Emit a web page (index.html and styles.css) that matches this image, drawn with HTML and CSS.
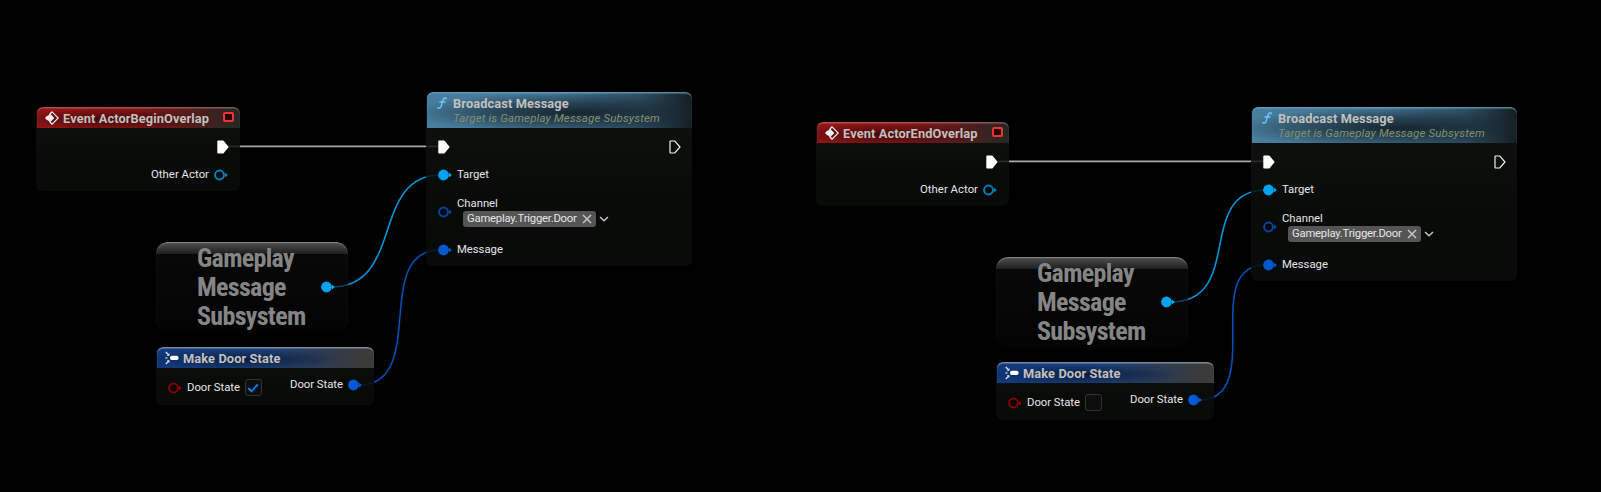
FILE: index.html
```
<!DOCTYPE html>
<html lang="en">
<head>
<meta charset="utf-8">
<title>Blueprint graph</title>
<link rel="stylesheet" href="styles.css">
</head>
<body>
<svg class="defs" width="0" height="0">
  <symbol id="i-event" viewBox="0 0 14 14"><path d="M7 .8 13.2 7 7 13.2 5.2 11.4V8.6H2.4L.8 7 2.4 5.4H5.2V2.6Z" fill="#560b0b" stroke="#f4eeee" stroke-width="1.2"/><path d="M.6 7 2.4 5.3H6V3.6L9.4 7 6 10.4V8.7H2.4Z" fill="#f4eeee"/><path d="M.8 7 7 .8 5 5.4ZM.8 7 7 13.2 5 8.6Z" fill="#f4eeee"/></symbol>
  <symbol id="i-func" viewBox="0 0 10 12"><path d="M9.2 1.6C8.6.5 6.9.6 6.3 2.2L4 9.6C3.5 11.2 1.7 11.6.8 10.6M3 4.9H8" fill="none" stroke="#6fc4f5" stroke-width="1.5" stroke-linecap="round"/></symbol>
  <symbol id="i-make" viewBox="0 0 14 14"><rect x="5" y="4.8" width="8.6" height="4.2" rx="1.9" fill="#fff"/><path d="M.8 1 3.6 3.8M.8 13 3.6 10.2M.2 7H2.6" stroke="#e8eef5" stroke-width="1.2"/><path d="M4.4 2V4.7H1.7ZM4.4 12V9.3H1.7Z" fill="#e8eef5"/></symbol>
  <symbol id="i-exec" viewBox="0 0 12 14"><path d="M.3 1.3Q.3.5 1.1.5H5.8Q6.4.5 6.8 1L11.7 7 6.8 13Q6.4 13.5 5.8 13.5H1.1Q.3 13.5.3 12.7Z" fill="#fff"/></symbol>
  <symbol id="i-exec-open" viewBox="0 0 12 14"><path d="M1 1.4Q1 1 1.4 1H5.8L11 7 5.8 13H1.4Q1 13 1 12.6Z" fill="none" stroke="#f2f2f2" stroke-width="1.2"/></symbol>
  <symbol id="i-pin" viewBox="0 0 14 12"><circle cx="5.5" cy="6" r="5.4" fill="currentColor"/><path d="M11 3.4 13.9 6 11 8.6Z" fill="currentColor"/></symbol>
  <symbol id="i-ring" viewBox="0 0 14 12"><circle cx="5.5" cy="6" r="4.4" fill="#030507" stroke="currentColor" stroke-width="2"/><path d="M11 3.4 13.9 6 11 8.6Z" fill="currentColor"/></symbol>
  <symbol id="i-x" viewBox="0 0 10 10"><path d="M1 1 9 9M9 1 1 9" stroke="#c4c4c4" stroke-width="1.5"/></symbol>
  <symbol id="i-down" viewBox="0 0 10 6"><path d="M1 1 5 4.8 9 1" fill="none" stroke="#c8c8c8" stroke-width="1.4"/></symbol>
  <symbol id="i-check" viewBox="0 0 12 10"><path d="M1.2 5 4.5 8.3 10.8 1.4" fill="none" stroke="#0a7af0" stroke-width="2"/></symbol>
</svg>

<main class="canvas">
  <svg class="wires" width="1601" height="492" fill="none">
    <path class="w-exec" d="M228 146.3H440"/>
    <path class="w-object" d="M331 287C405 287 370 175 441 175"/>
    <path class="w-struct" d="M358 385.3C430 385.3 370 249.7 441 249.7"/>
    <path class="w-exec" d="M998 161.3H1265"/>
    <path class="w-object" d="M1171 302C1245 302 1195 190 1266 190"/>
    <path class="w-struct" d="M1198 400.3C1268 400.3 1198 264.7 1266 264.7"/>
  </svg>

  <section class="node event event-a">
    <header class="head red"><svg class="ic14"><use href="#i-event"/></svg><h2>Event ActorBeginOverlap</h2><i class="delegate"></i></header>
    <div class="row exec-row"><svg class="exec"><use href="#i-exec"/></svg></div>
    <div class="row actor-row"><span>Other Actor</span><svg class="pin object-dim"><use href="#i-ring"/></svg></div>
  </section>

  <section class="node call call-a">
    <header class="head teal"><svg class="icf"><use href="#i-func"/></svg><div><h2>Broadcast Message</h2><p>Target is Gameplay Message Subsystem</p></div></header>
    <div class="row call-exec"><svg class="exec"><use href="#i-exec"/></svg><svg class="exec"><use href="#i-exec-open"/></svg></div>
    <div class="row target"><svg class="pin object"><use href="#i-pin"/></svg><span>Target</span></div>
    <div class="row channel"><svg class="pin struct-dim"><use href="#i-ring"/></svg><div><span>Channel</span><div class="tagrow"><b class="tag">Gameplay.Trigger.Door<svg class="x"><use href="#i-x"/></svg></b><svg class="down"><use href="#i-down"/></svg></div></div></div>
    <div class="row message"><svg class="pin struct"><use href="#i-pin"/></svg><span>Message</span></div>
  </section>

  <section class="node compact compact-a">
    <h3>Gameplay<br>Message<br>Subsystem</h3><svg class="pin object"><use href="#i-pin"/></svg>
  </section>

  <section class="node make make-a">
    <header class="head blue"><svg class="ic14"><use href="#i-make"/></svg><h2>Make Door State</h2></header>
    <div class="row make-row"><div class="in"><svg class="pin bool"><use href="#i-ring"/></svg><span>Door State</span><i class="box"><svg class="check"><use href="#i-check"/></svg></i></div><div class="out"><span>Door State</span><svg class="pin struct"><use href="#i-pin"/></svg></div></div>
  </section>

  <section class="node event event-b">
    <header class="head red"><svg class="ic14"><use href="#i-event"/></svg><h2>Event ActorEndOverlap</h2><i class="delegate"></i></header>
    <div class="row exec-row"><svg class="exec"><use href="#i-exec"/></svg></div>
    <div class="row actor-row"><span>Other Actor</span><svg class="pin object-dim"><use href="#i-ring"/></svg></div>
  </section>

  <section class="node call call-b">
    <header class="head teal"><svg class="icf"><use href="#i-func"/></svg><div><h2>Broadcast Message</h2><p>Target is Gameplay Message Subsystem</p></div></header>
    <div class="row call-exec"><svg class="exec"><use href="#i-exec"/></svg><svg class="exec"><use href="#i-exec-open"/></svg></div>
    <div class="row target"><svg class="pin object"><use href="#i-pin"/></svg><span>Target</span></div>
    <div class="row channel"><svg class="pin struct-dim"><use href="#i-ring"/></svg><div><span>Channel</span><div class="tagrow"><b class="tag">Gameplay.Trigger.Door<svg class="x"><use href="#i-x"/></svg></b><svg class="down"><use href="#i-down"/></svg></div></div></div>
    <div class="row message"><svg class="pin struct"><use href="#i-pin"/></svg><span>Message</span></div>
  </section>

  <section class="node compact compact-b">
    <h3>Gameplay<br>Message<br>Subsystem</h3><svg class="pin object"><use href="#i-pin"/></svg>
  </section>

  <section class="node make make-b">
    <header class="head blue"><svg class="ic14"><use href="#i-make"/></svg><h2>Make Door State</h2></header>
    <div class="row make-row"><div class="in"><svg class="pin bool"><use href="#i-ring"/></svg><span>Door State</span><i class="box"></i></div><div class="out"><span>Door State</span><svg class="pin struct"><use href="#i-pin"/></svg></div></div>
  </section>
</main>
</body>
</html>
```
FILE: styles.css
```
* { box-sizing: border-box; }
body { margin: 0; background: #000; font-family: Roboto, sans-serif; }
h2, h3, p { margin: 0; }
svg { display: block; flex: none; }
.defs { position: absolute; }
.canvas { position: relative; width: 1601px; height: 492px; overflow: hidden; background: #000; }

.wires { position: absolute; left: 0; top: 0; }
.w-exec { stroke: #a8a8a8; stroke-width: 1.8; }
.w-object { stroke: #0693d8; stroke-width: 1.6; }
.w-struct { stroke: #0450b4; stroke-width: 1.6; }

/* Nodes sit at free positions on the graph */
.node { position: absolute; border-radius: 6px; overflow: hidden; background: linear-gradient(rgba(19, 22, 19, .84), rgba(10, 13, 10, .84) 60%, rgba(9, 12, 9, .84)); color: #e6e6e6; font-size: 11.3px; line-height: 14px; letter-spacing: -.02px; }
.event { height: 84px; }
.event-a { left: 36px; top: 107px; width: 204px; }
.event-b { left: 816px; top: 122px; width: 193px; }
.call { width: 266px; height: 174px; }
.call-a { left: 426px; top: 92px; }
.call-b { left: 1251px; top: 107px; }
.compact { width: 192px; height: 91px; border-radius: 12px; }
.compact-a { left: 156px; top: 242px; }
.compact-b { left: 996px; top: 257px; }
.make { width: 218px; height: 58px; }
.make-a { left: 156px; top: 347px; }
.make-b { left: 996px; top: 362px; }

.head { display: flex; height: 21px; margin-left: 1px; padding: 4px 0 0 9px; border-radius: 6px 6px 0 0; }
.head h2 { font-size: 12.8px; font-weight: 700; line-height: 15px; letter-spacing: .11px; color: #c3c0bd; white-space: nowrap; }
.red { background: radial-gradient(ellipse 100px 11px at 36% 60%, rgba(40, 5, 5, .75), transparent), linear-gradient(90deg, #941416, #8a1517 45%, #5c1b1b 72%, #252725 98%); box-shadow: inset 0 1.5px 1px rgba(190, 120, 120, .6); }
.teal { height: 36px; background: radial-gradient(ellipse 165px 20px at 56% 58%, rgba(20, 32, 40, .92), rgba(24, 40, 50, .6) 50%, transparent), linear-gradient(90deg, #487e9e, #427492 50%, #2f5167 80%, #151d20 100%); box-shadow: inset 0 1.5px 1px rgba(100, 160, 195, .8); }
.blue { background: radial-gradient(ellipse 100px 10px at 40% 60%, rgba(7, 19, 45, .75), transparent), linear-gradient(90deg, #10397b, #1b3f78 50%, #2a3b58 72%, #3b3b3a 95%); box-shadow: inset 0 1.5px 1px rgba(165, 175, 190, .7); }
.ic14 { width: 14px; height: 14px; margin: 0 4px 0 -1px; }
.icf { width: 10px; height: 12px; margin: 1px 6px 0 1px; }
.head p { font-size: 11.5px; font-style: italic; line-height: 14px; letter-spacing: .15px; color: #83906f; white-space: nowrap; }
.delegate { width: 11px; height: 10px; margin: 1px 6px 0 auto; border: 2px solid #f63030; border-radius: 2px; background: #240606; }

.row { display: flex; align-items: center; white-space: nowrap; }
.exec { width: 12px; height: 14px; }
.pin { width: 14px; height: 12px; }
.object { color: #03a3f2; }
.object-dim { color: #0480bd; }
.struct { color: #0459d0; }
.struct-dim { color: #0445a0; }
.bool { color: #860206; }
.exec-row { justify-content: flex-end; height: 37px; padding: 0 11px 0 0; }
.actor-row { justify-content: flex-end; gap: 5px; height: 20px; padding-right: 12px; letter-spacing: .05px; }
.call-exec { justify-content: space-between; height: 37px; padding: 0 11px 0 12px; }
.target, .message { gap: 5px; height: 20px; padding-left: 12px; }
.channel { gap: 5px; height: 54px; padding-left: 12px; }
.channel span { display: block; margin-top: 0; }
.message { margin-top: 1px; }
.tagrow { display: flex; align-items: center; gap: 3px; margin: 0 0 0 6px; }
.tag { display: flex; align-items: center; justify-content: space-between; width: 133px; height: 16px; padding: 0 4px; border-radius: 3px; background: #555; font-weight: 400; letter-spacing: -.23px; }
.x { width: 10px; height: 10px; }
.down { width: 10px; height: 6px; }
.compact { display: flex; align-items: center; justify-content: space-between; padding: 0 13px 0 41px; background: linear-gradient(rgba(170, 170, 170, .45), rgba(45, 45, 45, .6) 12px, transparent 12px), linear-gradient(rgba(14, 14, 14, .6), rgba(6, 6, 6, .6)); box-shadow: inset 0 1.5px 1px -.5px #888; }
.compact h3 { font-family: "Roboto Condensed", Roboto, sans-serif; font-stretch: 75%; font-size: 26px; font-weight: 700; line-height: 29px; letter-spacing: -.67px; color: #858585; white-space: nowrap; }
.compact .pin { margin-bottom: 1px; }
.make-row { justify-content: space-between; align-items: flex-start; height: 37px; padding: 8px 12px 0 12px; }
.in, .out { display: flex; align-items: center; gap: 5px; }
.in { margin-top: 3px; }
.out { margin-top: 2px; }
.box { display: flex; align-items: center; justify-content: center; width: 17px; height: 17px; border: 1px solid #323232; border-radius: 3px; background: #0e0e0e; }
.check { width: 12px; height: 10px; }
```
